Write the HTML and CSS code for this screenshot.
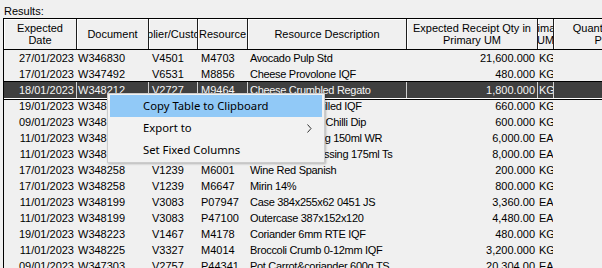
FILE: index.html
```html
<!DOCTYPE html>
<html>
<head>
<meta charset="utf-8">
<link rel="stylesheet" href="styles.css">
</head>
<body>
<div class="label">Results:</div>
<div class="frame">
  <div class="row head">
    <div class="hc"><span>Expected<br>Date</span></div>
    <div class="hc"><span>Document</span></div>
    <div class="hc"><span>Supplier/Customer</span></div>
    <div class="hc"><span>Resource</span></div>
    <div class="hc"><span>Resource Description</span></div>
    <div class="hc"><span>Expected Receipt Qty in<br>Primary UM</span></div>
    <div class="hc"><span>Primary<br>UM</span></div>
    <div class="hc"><span>Quantity Received in<br>Primary UM</span></div>
  </div>
  <div class="row"><div class="c date">27/01/2023</div><div class="c doc">W346830</div><div class="c sup">V4501</div><div class="c res">M4703</div><div class="c desc">Avocado Pulp Std</div><div class="c qty">21,600.000</div><div class="c uom">KG</div><div class="c"></div></div>
  <div class="row"><div class="c date">17/01/2023</div><div class="c doc">W347492</div><div class="c sup">V6531</div><div class="c res">M8856</div><div class="c desc">Cheese Provolone IQF</div><div class="c qty">480.000</div><div class="c uom">KG</div><div class="c"></div></div>
  <div class="row sel"><div class="c date">18/01/2023</div><div class="c doc">W348212</div><div class="c sup">V2727</div><div class="c res">M9464</div><div class="c desc">Cheese Crumbled Regato</div><div class="c qty">1,800.000</div><div class="c uom">KG</div><div class="c"></div></div>
  <div class="row"><div class="c date">19/01/2023</div><div class="c doc">W348214</div><div class="c sup">V2730</div><div class="c res">M9471</div><div class="c desc">Peppers Chargrilled IQF</div><div class="c qty">660.000</div><div class="c uom">KG</div><div class="c"></div></div>
  <div class="row"><div class="c date">09/01/2023</div><div class="c doc">W348105</div><div class="c sup">V1822</div><div class="c res">M5120</div><div class="c desc">Tomato Salsa &amp; Chilli Dip</div><div class="c qty">600.000</div><div class="c uom">KG</div><div class="c"></div></div>
  <div class="row"><div class="c date">11/01/2023</div><div class="c doc">W348197</div><div class="c sup">V3083</div><div class="c res">P41206</div><div class="c desc">Creamy Dressing 150ml WR</div><div class="c qty">6,000.00</div><div class="c uom">EA</div><div class="c"></div></div>
  <div class="row"><div class="c date">11/01/2023</div><div class="c doc">W348197</div><div class="c sup">V3083</div><div class="c res">P41207</div><div class="c desc">Bottle Label Dressing 175ml Ts</div><div class="c qty">8,000.00</div><div class="c uom">EA</div><div class="c"></div></div>
  <div class="row"><div class="c date">17/01/2023</div><div class="c doc">W348258</div><div class="c sup">V1239</div><div class="c res">M6001</div><div class="c desc">Wine Red Spanish</div><div class="c qty">200.000</div><div class="c uom">KG</div><div class="c"></div></div>
  <div class="row"><div class="c date">17/01/2023</div><div class="c doc">W348258</div><div class="c sup">V1239</div><div class="c res">M6647</div><div class="c desc">Mirin 14%</div><div class="c qty">800.000</div><div class="c uom">KG</div><div class="c"></div></div>
  <div class="row"><div class="c date">11/01/2023</div><div class="c doc">W348199</div><div class="c sup">V3083</div><div class="c res">P07947</div><div class="c desc">Case 384x255x62 0451 JS</div><div class="c qty">3,360.00</div><div class="c uom">EA</div><div class="c"></div></div>
  <div class="row"><div class="c date">11/01/2023</div><div class="c doc">W348199</div><div class="c sup">V3083</div><div class="c res">P47100</div><div class="c desc">Outercase 387x152x120</div><div class="c qty">4,480.00</div><div class="c uom">EA</div><div class="c"></div></div>
  <div class="row"><div class="c date">19/01/2023</div><div class="c doc">W348223</div><div class="c sup">V1467</div><div class="c res">M4178</div><div class="c desc">Coriander 6mm RTE IQF</div><div class="c qty">480.000</div><div class="c uom">KG</div><div class="c"></div></div>
  <div class="row"><div class="c date">11/01/2023</div><div class="c doc">W348225</div><div class="c sup">V3327</div><div class="c res">M4014</div><div class="c desc">Broccoli Crumb 0-12mm IQF</div><div class="c qty">3,200.000</div><div class="c uom">KG</div><div class="c"></div></div>
  <div class="row"><div class="c date">09/01/2023</div><div class="c doc">W347303</div><div class="c sup">V2757</div><div class="c res">P44341</div><div class="c desc">Pot Carrot&amp;coriander 600g TS</div><div class="c qty">20,304.00</div><div class="c uom">EA</div><div class="c"></div></div>
</div>
<div class="menu">
  <div class="mi hot">Copy Table to Clipboard</div>
  <div class="mi">Export to<svg class="arrow" width="5" height="9" viewBox="0 0 5 9"><path d="M0.5 0.5 L4 4.5 L0.5 8.5" fill="none" stroke="#333" stroke-width="1"/></svg></div>
  <div class="mi">Set Fixed Columns</div>
</div>
</body>
</html>
```
FILE: styles.css
```css
html, body {
  margin: 0;
  padding: 0;
  background: #f0f0f0;
  overflow: hidden;
  width: 602px;
  height: 268px;
}
body {
  position: relative;
  font-family: "Liberation Sans", Arial, sans-serif;
  font-size: 11px;
  color: #000;
}
.label {
  height: 13px;
  line-height: 13px;
  padding: 5px 0 0 4px;
}
.frame {
  margin-left: 3px;
  border-top: 1px solid #000;
  border-left: 1px solid #000;
  width: 700px;
}
.row {
  display: grid;
  grid-template-columns: 73px 72px 49px 50px 159px 131px 16px 140px;
  height: 16px;
  line-height: 16px;
}
.row.head {
  height: 30px;
  border-bottom: 1px solid #000;
  line-height: 12px;
}
.hc {
  display: flex;
  align-items: center;
  justify-content: center;
  overflow: hidden;
  border-right: 1px solid #1e1e1e;
  box-shadow: inset 1px 1px 0 #fff;
}
.hc span {
  white-space: nowrap;
  text-align: center;
  flex: none;
}
.c {
  overflow: hidden;
  white-space: nowrap;
  border-right: 1px solid transparent;
}
.date { text-align: right; padding-right: 2px; }
.doc { padding-left: 1px; }
.sup { padding-left: 3px; }
.res { padding-left: 3px; }
.desc { padding-left: 2px; letter-spacing: -0.3px; }
.qty { text-align: right; padding-right: 2px; }
.uom { padding-left: 1px; }
.row.sel {
  position: relative;
  z-index: 1;
  background: #3f3f3f;
  color: #f4f4f4;
  box-shadow: 0 -1px 0 #000, 0 1px 0 #fff, 0 2px 0 #000;
}
.row.sel .c {
  border-right-color: #cfcfcf;
}
.menu {
  position: absolute;
  left: 107px;
  top: 93px;
  width: 218px;
  height: 70px;
  box-sizing: border-box;
  padding: 1px 2px;
  background: #f2f2f2;
  border: 1px solid #cccccc;
  box-shadow: 1px 1px 2px rgba(0, 0, 0, 0.25);
  font-family: "Noto Sans", "Open Sans", sans-serif;
  font-size: 11.3px;
  z-index: 5;
}
.mi {
  height: 22px;
  line-height: 22px;
  padding-left: 33px;
  display: flex;
  align-items: center;
  position: relative;
}
.mi.hot {
  background: #91c9f7;
}
.arrow {
  margin-left: auto;
  margin-right: 10px;
}
```
